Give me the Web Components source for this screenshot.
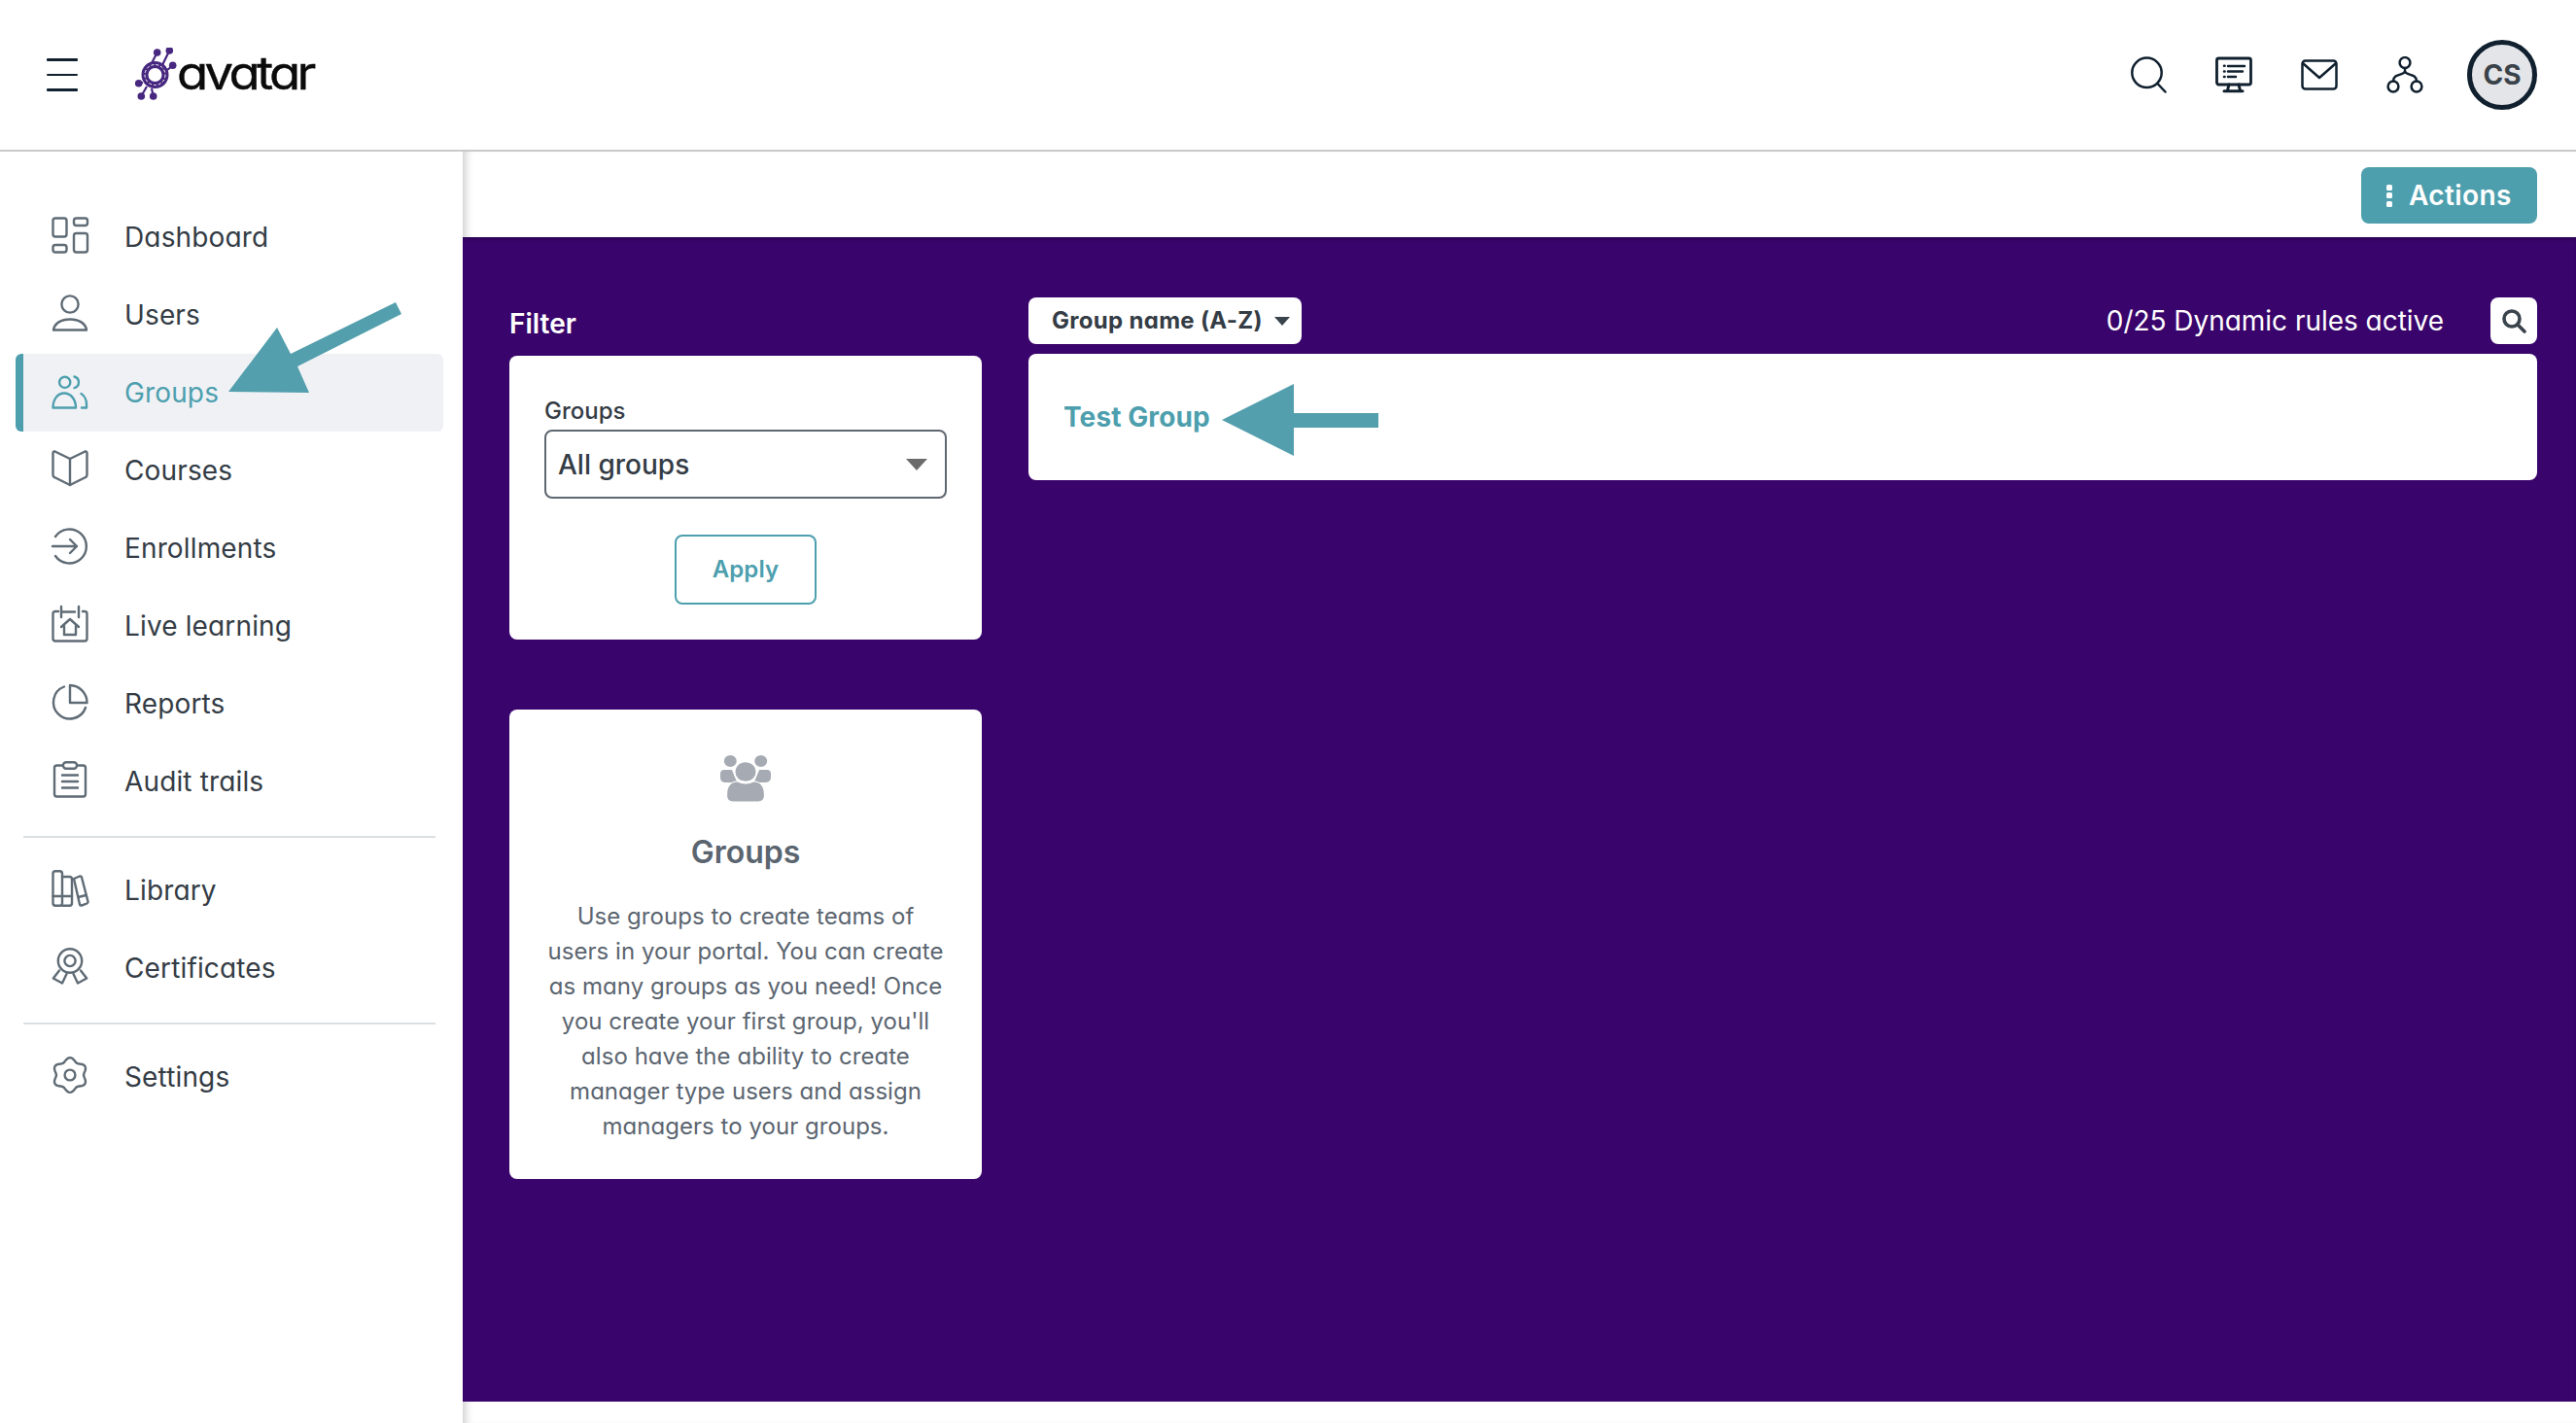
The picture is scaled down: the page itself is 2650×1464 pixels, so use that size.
<!DOCTYPE html>
<html lang="en">
<head>
<meta charset="utf-8">
<title>Groups</title>
<style>
  html, body { margin: 0; height: 100%; background: #fff; overflow: hidden; }
  body { font-family: Inter, "Liberation Sans", sans-serif; font-feature-settings: "cv11"; color: #343c45; }
</style>
</head>
<body>
<app-shell>
  <app-header slot="header"></app-header>
  <side-nav slot="nav"></side-nav>
  <action-bar slot="bar"></action-bar>
  <group-page slot="main"></group-page>
</app-shell>

<script>
// outline of the settings cog, six soft lobes
function gearPoints() {
  const pts = [];
  for (let i = 0; i < 72; i++) {
    const t = i * 5 * Math.PI / 180;
    const r = 16 + 1.9 * Math.cos(6 * t);
    pts.push((19 + r * Math.sin(t)).toFixed(2) + "," + (19 - r * Math.cos(t)).toFixed(2));
  }
  return pts.join(" ");
}

const svgOpen = 'slot="icon" width="38" height="38" viewBox="0 0 38 38" overflow="visible" stroke-width="2.4" stroke-linecap="round" stroke-linejoin="round"';

const NAV_ICONS = {
  dashboard: `<rect x="1.5" y="1.5" width="14" height="19" rx="2.5"/><rect x="23" y="1.5" width="14" height="7.5" rx="2.5"/><rect x="1.5" y="29" width="14" height="7.5" rx="2.5"/><rect x="23" y="17" width="14" height="19.5" rx="2.5"/>`,
  users: `<circle cx="19" cy="10" r="8.6"/><path d="M2 36.5C3 29.5 10 25.5 19 25.5S35 29.5 36 36.5Z"/>`,
  groups: `<circle cx="13.7" cy="10.3" r="5.6"/><path d="M23.5 4.5a6 6 0 0 1 0 11.6"/><path d="M1.5 36.5c0-9 5-15 11.5-15s12 6 12 15z"/><path d="M30.5 22c3.5 2 5.5 7 5.5 11v3.5h-5"/>`,
  courses: `<path d="M19 9L3.5 1.5Q1.5 1 1.5 3V25.5Q1.5 27.5 3 28L19 36L35 28Q36.5 27.5 36.5 25.5V3Q36.5 1 34.5 1.5Z"/><path d="M19 9V36"/>`,
  enrollments: `<path d="M4 9A17.5 17.5 0 1 1 4 29"/><path d="M1 19H26M19 12L26 19L19 26"/>`,
  live: `<path d="M7 6H4Q1.5 6 1.5 8.5V34Q1.5 36.5 4 36.5H34Q36.5 36.5 36.5 34V8.5Q36.5 6 34 6H32"/><path d="M10 1V12M28 1V12M10 6.5H24"/><path d="M10 22L19 14L28 22M13 21V30H25V21"/>`,
  reports: `<path d="M19 20V2A18 18 0 0 1 36.5 20Z"/><path d="M13 3.5A17 17 0 1 0 35 25"/>`,
  audit: `<rect x="3" y="4.5" width="32" height="32" rx="2.5"/><rect x="12" y="1.2" width="14" height="6.5" rx="3" fill="#fff"/><path d="M11 14.5H27M11 21H27M11 27.5H27"/>`,
  library: `<rect x="1.5" y="1.2" width="9.5" height="35.5" rx="2.5"/><path d="M11 7H18.5Q21 7 21 9.5V34Q21 36.7 18.5 36.7H11"/><path d="M1.5 27H21"/><path d="M23 9L29 6.5Q30.5 6.2 31 7.5L37.5 32.5Q37.8 34 36.5 34.5L31 36.5Q29.5 36.8 29 35.5Z"/><path d="M27.5 28L35.5 26"/>`,
  certificates: `<circle cx="19" cy="13.5" r="12.2"/><circle cx="19" cy="13.5" r="5.6"/><path d="M8 23.5L1.8 31.5L11 36.5L15.5 27"/><path d="M30 23.5L36.2 31.5L27 36.5L22.5 27"/>`,
  settings: `<polygon points="${gearPoints()}"/><circle cx="19" cy="19" r="5.4"/>`
};

function navIcon(name) {
  return `<svg ${svgOpen}>${NAV_ICONS[name]}</svg>`;
}

customElements.define("app-shell", class extends HTMLElement {
  constructor() {
    super();
    this.attachShadow({ mode: "open" }).innerHTML = `
      <style>
        :host { display: grid; grid-template-columns: 476px 1fr; grid-template-rows: 156px 1fr; height: 1464px; position: relative; }
        .head { grid-column: 1 / 3; }
        .right { display: grid; grid-template-rows: 88px 1198px 1fr; min-width: 0; }
        .foot { box-shadow: inset 9px 0 8px -6px rgba(0,0,0,.2); }
        .arrow { position: absolute; left: 0; top: 0; pointer-events: none; }
      </style>
      <div class="head"><slot name="header"></slot></div>
      <div><slot name="nav"></slot></div>
      <div class="right">
        <slot name="bar"></slot>
        <slot name="main"></slot>
        <div class="foot"></div>
      </div>
      <!-- the two callout arrows drawn over the screenshot -->
      <svg class="arrow" width="2650" height="1464" fill="#539fad">
        <polygon points="235,403 285,337 299,364 407,311 413,323 306,377 318,404"/>
        <polygon points="1257,432 1331,395 1331,425 1418,425 1418,440 1331,440 1331,469"/>
      </svg>`;
  }
});

customElements.define("app-header", class extends HTMLElement {
  constructor() {
    super();
    this.attachShadow({ mode: "open" }).innerHTML = `
      <style>
        :host { display: flex; align-items: center; height: 154px; border-bottom: 2px solid #c9c9c9; padding: 0 40px 0 48px; background: #fff; }
        .burger { width: 32px; display: flex; flex-direction: column; gap: 13px; }
        .burger i { height: 2.4px; background: #10202e; border-radius: 1px; }
        .logo { display: flex; align-items: center; margin-left: 58px; }
        .logo b { display: block; width: 144px; margin-left: 0; font: 400 47px Inter, sans-serif; font-feature-settings: "cv11"; color: #0b0b0b; letter-spacing: -3.3px; transform: scaleX(1.12); transform-origin: left center; position: relative; top: -3px; -webkit-text-stroke: .4px #0b0b0b; }
        .tools { margin-left: auto; display: flex; align-items: center; }
        .tools svg { display: block; stroke: #10202e; fill: none; stroke-width: 2.5; stroke-linecap: round; stroke-linejoin: round; }
        .tools svg + svg { margin-left: 50px; }
        .me { width: 62px; height: 62px; border: 5px solid #10202e; border-radius: 50%; background: #e4e5e8; margin-left: 45px; display: flex; align-items: center; justify-content: center; font: 700 28px Inter, sans-serif; color: #3a424a; }
      </style>
      <div class="burger"><i></i><i></i><i></i></div>
      <div class="logo">
        <svg width="44" height="56" viewBox="137 50 44 56">
          <g stroke="#47277f" stroke-width="2.2" fill="none">
            <path d="M155 66L160.7 55M166 68L173.3 53M171 73L176.7 68.5M146 86L141.7 87M150 90L144.3 100M155 92L156.7 100"/>
          </g>
          <g fill="#47277f">
            <circle cx="160.7" cy="55" r="3.8"/><circle cx="173.3" cy="53" r="3.8"/><circle cx="176.7" cy="68.3" r="3.8"/>
            <circle cx="141.7" cy="86.7" r="3.8"/><circle cx="144.3" cy="100" r="3.8"/><circle cx="156.7" cy="100" r="3.8"/>
          </g>
          <circle cx="158.5" cy="78" r="10.5" fill="none" stroke="#47277f" stroke-width="7"/>
          <circle cx="158.5" cy="78" r="10.5" fill="none" stroke="#fff" stroke-width="1" stroke-dasharray="3 2"/>
        </svg>
        <b>avatar</b>
      </div>
      <div class="tools">
        <svg width="38" height="38" viewBox="0 0 38 38"><circle cx="17.5" cy="16.8" r="15.2"/><path d="M28.5 28L36.5 36.5"/></svg>
        <svg width="38" height="38" viewBox="0 0 38 38"><rect x="1.5" y="2" width="35" height="27" rx="2" stroke-width="2.8"/><path d="M13 10H30M13 15.5H28M13 21H21"/><path d="M9 9.7h.6M9 15.5h.6M9 21h.6"/><path d="M14 29L12.5 35M24 29L25.5 35" stroke-width="3"/><path d="M9 35.8H28" stroke-width="3"/></svg>
        <svg width="38" height="38" viewBox="0 0 38 38"><rect x="1.5" y="4.5" width="35" height="29" rx="3"/><path d="M2.5 7.5L19 22L35.5 7.5"/></svg>
        <svg width="38" height="38" viewBox="0 0 38 38"><circle cx="19" cy="6.5" r="5.4"/><circle cx="7" cy="31" r="5.4"/><circle cx="31" cy="31" r="5.4"/><path d="M19 12v3c0 5-12 2-12 10.5M19 15c0 5 12 2 12 10.5"/></svg>
        <div class="me">CS</div>
      </div>`;
  }
});

customElements.define("nav-item", class extends HTMLElement {
  constructor() {
    super();
    this.attachShadow({ mode: "open" }).innerHTML = `
      <style>
        :host { display: flex; align-items: center; box-sizing: border-box; height: 80px; padding-left: 29px; border-left: 8px solid transparent; border-radius: 6px; font-size: 28px; letter-spacing: .14px; color: #343c45; stroke: #5f6b75; fill: none; }
        :host([active]) { background: #f0f1f5; border-left-color: #4d9fae; color: #4d9fae; stroke: #4d9fae; }
        .ic { display: block; width: 38px; height: 38px; margin: -4px 37px 0 0; }
      </style>
      <div class="ic"><slot name="icon"></slot></div>
      <span><slot></slot></span>`;
  }
});

customElements.define("side-nav", class extends HTMLElement {
  constructor() {
    super();
    const row = (name, label, active) => `<nav-item ${active ? "active" : ""}>${navIcon(name)}${label}</nav-item>`;
    this.attachShadow({ mode: "open" }).innerHTML = `
      <style>
        :host { display: block; padding: 48px 20px 0 16px; background: #fff; }
        .rule { height: 2px; background: #dcdfe2; margin: 16px 8px 14px; }
      </style>
      ${row("dashboard", "Dashboard")}
      ${row("users", "Users")}
      ${row("groups", "Groups", true)}
      ${row("courses", "Courses")}
      ${row("enrollments", "Enrollments")}
      ${row("live", "Live learning")}
      ${row("reports", "Reports")}
      ${row("audit", "Audit trails")}
      <div class="rule"></div>
      ${row("library", "Library")}
      ${row("certificates", "Certificates")}
      <div class="rule"></div>
      ${row("settings", "Settings")}`;
  }
});

customElements.define("action-bar", class extends HTMLElement {
  constructor() {
    super();
    this.attachShadow({ mode: "open" }).innerHTML = `
      <style>
        :host { display: flex; justify-content: flex-end; box-sizing: border-box; padding: 16px 40px 0 0; background: #fff; box-shadow: inset 9px 0 8px -6px rgba(0,0,0,.2); }
        .btn { display: flex; align-items: center; box-sizing: border-box; width: 181px; height: 58px; padding-left: 26px; background: #4d9fae; color: #fff; border-radius: 8px; font-size: 28px; font-weight: 600; letter-spacing: .4px; }
        .dots { display: flex; flex-direction: column; gap: 2.5px; margin-right: 17px; }
        .dots i { width: 6px; height: 6px; border-radius: 1.5px; background: #fff; }
      </style>
      <div class="btn"><span class="dots"><i></i><i></i><i></i></span>Actions</div>`;
  }
});

customElements.define("filter-card", class extends HTMLElement {
  constructor() {
    super();
    this.attachShadow({ mode: "open" }).innerHTML = `
      <style>
        :host { display: block; box-sizing: border-box; height: 292px; padding: 42px 36px 0; background: #fff; border-radius: 8px; }
        label { display: block; font-size: 24px; font-weight: 500; line-height: 30px; margin-bottom: 4px; color: #343c45; }
        .select { display: flex; align-items: center; justify-content: space-between; box-sizing: border-box; height: 71px; padding: 0 18px 0 12px; border: 2px solid #5f6770; border-radius: 8px; font-size: 28px; font-weight: 500; color: #343c45; }
        .select i { width: 0; height: 0; border: 11.5px solid transparent; border-top: 12px solid #6b6b6b; border-bottom: 0; }
        .apply { display: flex; align-items: center; justify-content: center; box-sizing: border-box; width: 146px; height: 72px; margin: 37px auto 0; padding-bottom: 2px; border: 2px solid #4d9fae; border-radius: 8px; color: #4d9fae; font-size: 24px; font-weight: 600; letter-spacing: .1px; }
      </style>
      <label>Groups</label>
      <div class="select">All groups<i></i></div>
      <div class="apply">Apply</div>`;
  }
});

customElements.define("info-card", class extends HTMLElement {
  constructor() {
    super();
    this.attachShadow({ mode: "open" }).innerHTML = `
      <style>
        :host { display: block; box-sizing: border-box; height: 483px; padding: 47px 38px 0; background: #fff; border-radius: 8px; text-align: center; color: #5b6570; }
        svg { display: block; margin: 0 auto; }
        h3 { margin: 32px 0 0; font-size: 32px; line-height: 40px; font-weight: 600; }
        p { margin: 28px 0 0; font-size: 24px; line-height: 36px; letter-spacing: .04px; }
      </style>
      <svg width="52" height="48" viewBox="0 0 48 48" preserveAspectRatio="none">
        <g fill="#a6abb3">
          <circle cx="9.5" cy="6" r="6"/><circle cx="38.5" cy="6" r="6"/>
          <path d="M0 19q0-4 4-4h7l5 13H5q-5 0-5-5zM48 19q0-4-4-4h-7l-5 13h10q6 0 6-5z"/>
          <circle cx="24" cy="17" r="10.5" stroke="#fff" stroke-width="1.5"/>
          <path d="M6 40c0-8 4-13 10-13q2 0 3 1 5 2 10 0 1-1 3-1c6 0 10 5 10 13v2q0 6-6 6H12q-6 0-6-6z" stroke="#fff" stroke-width="1.2"/>
        </g>
      </svg>
      <h3>Groups</h3>
      <p>Use groups to create teams of users in your portal. You can create as many groups as you need! Once you create your first group, you'll also have the ability to create manager type users and assign managers to your groups.</p>`;
  }
});

customElements.define("group-toolbar", class extends HTMLElement {
  constructor() {
    super();
    this.attachShadow({ mode: "open" }).innerHTML = `
      <style>
        :host { display: flex; align-items: center; height: 48px; color: #fff; }
        .sort { display: flex; align-items: center; box-sizing: border-box; width: 281px; height: 48px; padding: 0 0 2px 24px; background: #fff; border-radius: 8px; color: #343c45; font-size: 24px; font-weight: 700; letter-spacing: .3px; }
        .sort i { width: 0; height: 0; margin: 2px 0 0 12px; border: 8.5px solid transparent; border-top: 9px solid #3a444c; border-bottom: 0; }
        .count { margin-left: auto; font-size: 28px; letter-spacing: -.03px; }
        .find { display: flex; align-items: center; justify-content: center; width: 48px; height: 48px; margin-left: 48px; background: #fff; border-radius: 8px; }
      </style>
      <div class="sort">Group name (A-Z)<i></i></div>
      <div class="count">0/25 Dynamic rules active</div>
      <div class="find"><svg width="25" height="25" viewBox="0 0 25 25" fill="none" stroke="#3a444c" stroke-width="3.6" stroke-linecap="round"><circle cx="10" cy="10" r="8"/><path d="M16 16L23 23"/></svg></div>`;
  }
});

customElements.define("group-list", class extends HTMLElement {
  constructor() {
    super();
    this.attachShadow({ mode: "open" }).innerHTML = `
      <style>
        :host { display: flex; align-items: center; box-sizing: border-box; height: 130px; margin-top: 10px; padding: 0 36px; background: #fff; border-radius: 8px; color: #4d9fae; font-size: 28px; font-weight: 700; letter-spacing: .1px; }
      </style>
      <slot></slot>`;
  }
});

customElements.define("group-page", class extends HTMLElement {
  constructor() {
    super();
    this.attachShadow({ mode: "open" }).innerHTML = `
      <style>
        :host { display: grid; grid-template-columns: 486px 1fr; column-gap: 48px; align-items: start; box-sizing: border-box; padding: 62px 40px 0 48px; background: #39046b; box-shadow: inset 0 4px 4px -3px rgba(0,0,0,.35); }
        .title { height: 54px; display: flex; align-items: center; margin-bottom: 6px; color: #fff; font-size: 28px; font-weight: 600; }
        info-card { margin-top: 72px; }
      </style>
      <div>
        <div class="title">Filter</div>
        <filter-card></filter-card>
        <info-card></info-card>
      </div>
      <div>
        <group-toolbar></group-toolbar>
        <group-list>Test Group</group-list>
      </div>`;
  }
});
</script>
</body>
</html>
